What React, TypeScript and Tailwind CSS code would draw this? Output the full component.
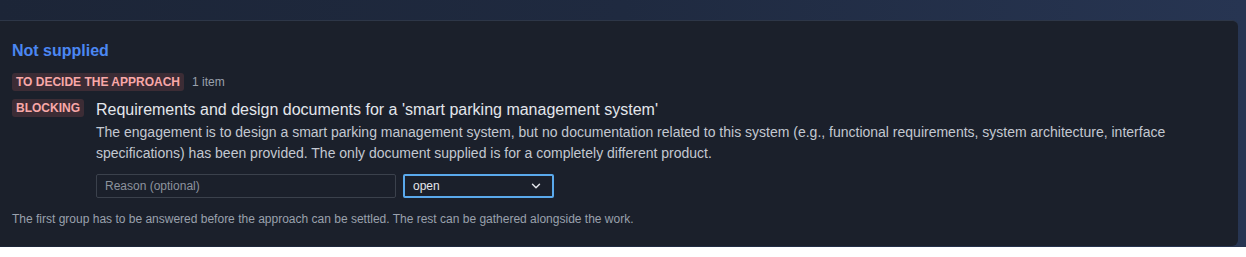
import React from "react"

const font = { fontFamily: '"Liberation Sans", Arial, sans-serif' }

const Badge = ({ text }: { text: string }) => (
    <span className="inline-block rounded-[3px] bg-[#3c2c35] px-1 py-px text-xs leading-4 font-bold uppercase text-[#f9a8a8] whitespace-nowrap">
        {text}
    </span>
)

const ChevronDown = () => (
    <svg width="14" height="14" viewBox="0 0 24 24" fill="none" stroke="currentColor" strokeWidth="2.5" strokeLinecap="round" strokeLinejoin="round">
        <path d="M6 9l6 6 6-6" />
    </svg>
)

export default function App() {
    return (
        <div
            className="h-[247px] overflow-hidden bg-gradient-to-r from-[#1c2537] via-[#1f2a40] to-[#273552] pt-5 pr-2"
            style={font}
        >
            <div className="flex h-[226px] flex-col rounded-r-md border-t border-[#2d3647] bg-[#1b202b] px-3 pt-[18px] pb-5">
                <h2 className="text-base leading-6 font-bold text-[#4b87f2]">Not supplied</h2>
                <div className="mt-[10px] flex items-center gap-2">
                    <Badge text="To decide the approach" />
                    <span className="text-xs text-[#9aa1ad]">1 item</span>
                </div>
                <div className="mt-2 flex items-start gap-3">
                    <Badge text="Blocking" />
                    <div className="-mt-px flex flex-1 flex-col">
                        <span className="text-base leading-6 text-[#e3e6eb]">
                            Requirements and design documents for a 'smart parking management system'
                        </span>
                        <p className="text-sm leading-[21px] text-[#c3c8d1]">
                            The engagement is to design a smart parking management system, but no documentation related to this system (e.g., functional requirements, system architecture, interface specifications) has been provided. The only document supplied is for a completely different product.
                        </p>
                        <div className="mt-2.5 flex items-center gap-[7px]">
                            <input
                                placeholder="Reason (optional)"
                                className="h-6 w-[300px] rounded-[2px] border border-[#3b414c] bg-[#1b202b] px-2 text-xs text-[#c3c8d1] placeholder:text-[#8d939e] outline-none"
                            />
                            <div className="flex h-6 w-[151px] items-center justify-between rounded-[2px] border-2 border-[#5aa9ec] bg-[#1b202b] pr-[9px] pl-2 text-xs text-[#e3e6eb]">
                                <span>open</span>
                                <ChevronDown />
                            </div>
                        </div>
                    </div>
                </div>
                <p className="mt-[13px] text-xs leading-4 text-[#9aa1ad]">
                    The first group has to be answered before the approach can be settled. The rest can be gathered alongside the work.
                </p>
            </div>
        </div>
    )
}
